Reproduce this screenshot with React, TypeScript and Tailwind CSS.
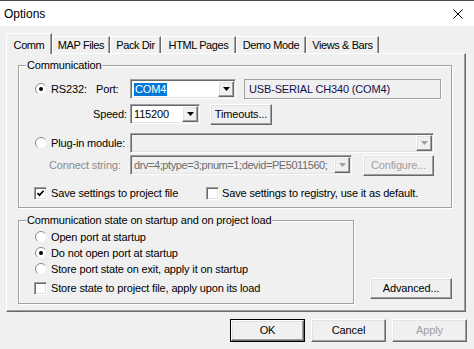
import type { ReactNode } from 'react'

// classic 3D borders
const raised =
  'border border-t-white border-l-white border-r-[#696969] border-b-[#696969] shadow-[inset_-1px_-1px_0_#a0a0a0,inset_1px_1px_0_#e3e3e3]'
const sunken =
  'border border-t-[#a0a0a0] border-l-[#a0a0a0] border-r-white border-b-white shadow-[inset_1px_1px_0_#696969,inset_-1px_-1px_0_#e3e3e3]'
const etched = 'border border-[#a0a0a0] shadow-[1px_1px_0_#fff,inset_1px_1px_0_#fff]'

function Radio({ on }: { on?: boolean }) {
  return (
    <svg width="12" height="12" viewBox="0 0 12 12" className="shrink-0">
      <defs>
        <linearGradient id="rg" x1="0" y1="0" x2="1" y2="1">
          <stop offset="0.45" stopColor="#8a8a8a" />
          <stop offset="0.6" stopColor="#ececec" />
        </linearGradient>
      </defs>
      <circle cx="6" cy="6" r="5.5" fill="#fff" stroke="url(#rg)" />
      {on && <circle cx="6" cy="6" r="2" fill="#000" />}
    </svg>
  )
}

function Check({ on }: { on?: boolean }) {
  return (
    <span className={`w-[13px] h-[13px] bg-white ${sunken} flex items-center justify-center shrink-0`}>
      {on && (
        <svg width="7" height="7" viewBox="0 0 7 7">
          <path d="M0.5 3 L2.5 5.2 L6.6 0.8" stroke="#000" strokeWidth="1.7" fill="none" />
        </svg>
      )}
    </span>
  )
}

function Arrow({ dim }: { dim?: boolean }) {
  return (
    <svg width="7" height="4" viewBox="0 0 7 4">
      <path d="M0 0h7L3.5 4z" fill={dim ? '#a0a0a0' : '#000'} />
    </svg>
  )
}

function Combo({ w, children, disabled }: { w: string; children?: ReactNode; disabled?: boolean }) {
  return (
    <div className={`${w} h-[20px] ${sunken} ${disabled ? 'bg-[#f0f0f0]' : 'bg-white'} flex p-[1px] shrink-0`}>
      <div className="flex-1 flex items-center pl-[2px] overflow-hidden whitespace-nowrap">{children}</div>
      <div className={`w-[16px] h-[16px] ${raised} bg-[#f0f0f0] flex items-center justify-center`}>
        <Arrow dim={disabled} />
      </div>
    </div>
  )
}

function Btn({ w, h, children, dim, def }: { w: string; h: string; children: ReactNode; dim?: boolean; def?: boolean }) {
  const inner = (
    <div className={`w-full h-full ${raised} flex items-center justify-center ${dim ? 'text-[#a0a0a0]' : 'text-black'}`}>
      {children}
    </div>
  )
  return <div className={`${w} ${h} shrink-0 ${def ? 'border border-black' : ''}`}>{inner}</div>
}

function Group({ label, className, children }: { label: string; className: string; children: ReactNode }) {
  return (
    <div className={`relative ${etched} ${className}`}>
      <span className="absolute -top-[7px] left-[7px] px-[1px] bg-[#f0f0f0] leading-[13px]">{label}</span>
      {children}
    </div>
  )
}

const tabs = [
  { name: 'MAP Files', w: 'w-[58px]' },
  { name: 'Pack Dir', w: 'w-[51px]' },
  { name: 'HTML Pages', w: 'w-[75px]' },
  { name: 'Demo Mode', w: 'w-[70px]' },
  { name: 'Views & Bars', w: 'w-[73px]' },
]

export default function App() {
  return (
    <div className="w-[474px] h-[349px] overflow-hidden bg-[#f0f0f0] text-black text-[11px] tracking-[-0.15px] font-['Liberation_Sans',Arial,sans-serif]">
      {/* Title bar */}
      <div className="h-[26px] bg-white border-t border-[#4a4a4a] flex items-center justify-between pl-[4px] pr-[11px]">
        <span className="text-[12px] tracking-normal">Options</span>
        <svg width="10" height="10" viewBox="0 0 10 10">
          <path d="M0.5 0.5 L9.5 9.5 M9.5 0.5 L0.5 9.5" stroke="#000" strokeWidth="1" />
        </svg>
      </div>

      {/* Tabs */}
      <div className="mt-[7px] ml-[6px] h-[20px] flex items-end text-[11px] tracking-[-0.4px]">
        <div className="relative z-10 w-[46px] h-[21px] -mb-[1px] bg-[#f0f0f0] border-t border-l border-r border-t-white border-l-white border-r-[#696969] shadow-[inset_-1px_0_0_#a0a0a0] flex items-start justify-center pt-[3px]">
          Comm
        </div>
        {tabs.map((t) => (
          <div
            key={t.name}
            className={`${t.w} h-[17px] border-t border-l border-r border-t-white border-l-white border-r-[#696969] shadow-[inset_-1px_0_0_#a0a0a0] flex items-center justify-center`}
          >
            {t.name}
          </div>
        ))}
      </div>

      {/* Tab panel */}
      <div className="ml-[6px] w-[460px] h-[259px] border border-t-white border-l-white border-r-[#696969] border-b-[#696969] shadow-[inset_-1px_-1px_0_#a0a0a0]">
        <Group label="Communication" className="ml-[11px] mt-[11px] w-[434px] h-[143px]">
          <div className="mt-[13px] h-[20px] flex items-center">
            <span className="ml-[16px]"><Radio on /></span>
            <span className="ml-[4px] w-[45px]">RS232:</span>
            <span className="w-[34px]">Port:</span>
            <Combo w="w-[106px]">
              <span className="bg-[#0078d7] text-white leading-[13px] px-[1px]">COM4</span>
            </Combo>
            <div className="ml-[8px] w-[197px] h-[20px] border border-[#a0a0a0] shadow-[1px_1px_0_#fff] flex items-center pl-[4px] text-[#10104a]">
              USB-SERIAL CH340 (COM4)
            </div>
          </div>
          <div className="mt-[5px] h-[20px] flex items-center">
            <span className="ml-[74px] w-[37px]">Speed:</span>
            <Combo w="w-[70px]">115200</Combo>
            <span className="ml-[10px]">
              <Btn w="w-[62px]" h="h-[21px]">Timeouts...</Btn>
            </span>
          </div>
          <div className="mt-[9px] h-[20px] flex items-center">
            <span className="ml-[16px]"><Radio /></span>
            <span className="ml-[4px] w-[79px]">Plug-in module:</span>
            <Combo w="w-[304px]" disabled />
          </div>
          <div className="mt-[2px] h-[20px] flex items-center">
            <span className="ml-[30px] w-[81px] text-[#8c8c8c]">Connect string:</span>
            <Combo w="w-[222px]" disabled>
              <span className="text-[#6d6d6d] tracking-[-0.42px]">drv=4;ptype=3;pnum=1;devid=PE5011560;</span>
            </Combo>
            <span className="ml-[11px]">
              <Btn w="w-[71px]" h="h-[21px]" dim>Configure...</Btn>
            </span>
          </div>
          <div className="mt-[11px] h-[14px] flex items-center">
            <span className="ml-[15px]"><Check on /></span>
            <span className="ml-[4px] w-[155px]">Save settings to project file</span>
            <Check />
            <span className="ml-[3px]">Save settings to registry, use it as default.</span>
          </div>
        </Group>

        <div className="ml-[11px] mt-[12px] flex items-end">
          <Group label="Communication state on startup and on project load" className="w-[336px] h-[84px]">
            <div className="mt-[8px] h-[16px] flex items-center">
              <span className="ml-[16px]"><Radio /></span>
              <span className="ml-[4px]">Open port at startup</span>
            </div>
            <div className="h-[16px] flex items-center">
              <span className="ml-[16px]"><Radio on /></span>
              <span className="ml-[4px]">Do not open port at startup</span>
            </div>
            <div className="h-[16px] flex items-center">
              <span className="ml-[16px]"><Radio /></span>
              <span className="ml-[4px]">Store port state on exit, apply it on startup</span>
            </div>
            <div className="mt-[4px] h-[14px] flex items-center">
              <span className="ml-[15px]"><Check /></span>
              <span className="ml-[4px]">Store state to project file, apply upon its load</span>
            </div>
          </Group>
          <div className="ml-[16px] mb-[5px]">
            <Btn w="w-[82px]" h="h-[21px]">Advanced...</Btn>
          </div>
        </div>
      </div>

      {/* Dialog buttons */}
      <div className="mt-[7px] pr-[7px] flex justify-end gap-[6px]">
        <Btn w="w-[75px]" h="h-[23px]" def>OK</Btn>
        <Btn w="w-[75px]" h="h-[23px]">Cancel</Btn>
        <Btn w="w-[75px]" h="h-[23px]" dim>Apply</Btn>
      </div>
    </div>
  )
}
